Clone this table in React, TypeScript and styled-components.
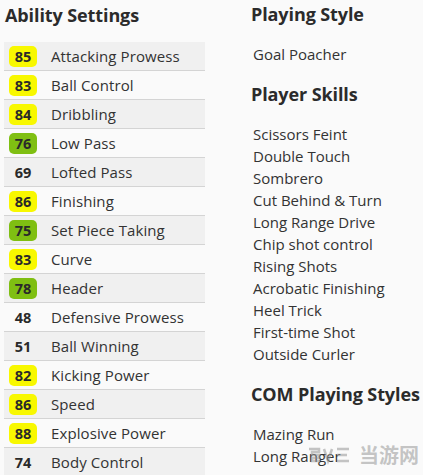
import React from "react";
import styled, { createGlobalStyle } from "styled-components";

const Global = createGlobalStyle`
  html, body { margin: 0; padding: 0; background: #fafafa; }
  body { font-family: "Open Sans", "Noto Sans", sans-serif; color: #333; }
`;

const Page = styled.div`
  position: relative;
  width: 423px;
  height: 475px;
  overflow: hidden;
  display: grid;
  grid-template-columns: 201px 1fr;
  column-gap: 45px;
  padding: 0 0 0 4px;
  box-sizing: border-box;
`;

const Column = styled.div`
  display: flex;
  flex-direction: column;
`;

const Heading = styled.h2<{ $top: number }>`
  margin: ${(p) => p.$top}px 0 0 1px;
  font-family: "Open Sans", sans-serif;
  font-weight: 700;
  font-size: 18px;
  line-height: 30px;
  color: #2b2b2b;
  white-space: nowrap;
  letter-spacing: -0.1px;
`;

const Table = styled.div`
  margin-top: 12px;
  display: flex;
  flex-direction: column;
`;

const Row = styled.div<{ $odd: boolean }>`
  display: flex;
  align-items: center;
  height: 28px;
  border-bottom: 1px solid #d4d4d4;
  background: ${(p) => (p.$odd ? "#f0f0f0" : "#fafafa")};
`;

const Badge = styled.span<{ $tone: "yellow" | "green" | "none" }>`
  width: 28px;
  height: 21px;
  margin-left: 5px;
  border-radius: 5px;
  display: flex;
  align-items: center;
  justify-content: center;
  font-weight: 700;
  font-size: 14.5px;
  color: #2a2a2a;
  background: ${(p) =>
    p.$tone === "yellow" ? "#f8f800" : p.$tone === "green" ? "#7fbf12" : "transparent"};
`;

const Label = styled.span`
  margin-left: 14px;
  font-size: 15px;
  color: #333;
  white-space: nowrap;
  letter-spacing: 0.1px;
`;

const List = styled.div<{ $top: number }>`
  margin: ${(p) => p.$top}px 0 0 3px;
  display: flex;
  flex-direction: column;
`;

const Item = styled.div`
  font-size: 15px;
  line-height: 22px;
  color: #333;
  white-space: nowrap;
`;

const Watermark = styled.div`
  position: absolute;
  right: 4px;
  bottom: 6px;
  display: flex;
  align-items: center;
  gap: 6px;
  color: rgba(150, 150, 150, 0.55);
  font-family: "Noto Sans CJK SC", sans-serif;
  font-size: 20px;
  font-weight: 700;
  pointer-events: none;
`;

type Stat = [number, string];
const stats: Stat[] = [
  [85, "Attacking Prowess"],
  [83, "Ball Control"],
  [84, "Dribbling"],
  [76, "Low Pass"],
  [69, "Lofted Pass"],
  [86, "Finishing"],
  [75, "Set Piece Taking"],
  [83, "Curve"],
  [78, "Header"],
  [48, "Defensive Prowess"],
  [51, "Ball Winning"],
  [82, "Kicking Power"],
  [86, "Speed"],
  [88, "Explosive Power"],
  [74, "Body Control"],
];

const tone = (v: number): "yellow" | "green" | "none" =>
  v >= 80 ? "yellow" : v >= 75 ? "green" : "none";

const skills = [
  "Scissors Feint",
  "Double Touch",
  "Sombrero",
  "Cut Behind & Turn",
  "Long Range Drive",
  "Chip shot control",
  "Rising Shots",
  "Acrobatic Finishing",
  "Heel Trick",
  "First-time Shot",
  "Outside Curler",
];

export default function App() {
  return (
    <>
      <Global />
      <Page>
        <Column>
          <Heading $top={0}>Ability Settings</Heading>
          <Table>
            {stats.map(([v, name], i) => (
              <Row key={name} $odd={i % 2 === 0}>
                <Badge $tone={tone(v)}>{v}</Badge>
                <Label>{name}</Label>
              </Row>
            ))}
          </Table>
        </Column>
        <Column>
          <Heading $top={-1}>Playing Style</Heading>
          <List $top={14}>
            <Item>Goal Poacher</Item>
          </List>
          <Heading $top={14}>Player Skills</Heading>
          <List $top={14}>
            {skills.map((s) => (
              <Item key={s}>{s}</Item>
            ))}
          </List>
          <Heading $top={14}>COM Playing Styles</Heading>
          <List $top={14}>
            <Item>Mazing Run</Item>
            <Item>Long Ranger</Item>
          </List>
        </Column>
        <Watermark>
          <svg width="46" height="20" viewBox="0 0 46 20">
            <path d="M2 4h10v3H5v3h7v3H5v3h8" fill="none" stroke="currentColor" strokeWidth="2.5" />
            <path d="M17 4l4 12 4-12" fill="none" stroke="currentColor" strokeWidth="2.5" />
            <path d="M30 4h12M30 10h10M30 16h12" fill="none" stroke="currentColor" strokeWidth="2.5" />
          </svg>
          <span>当游网</span>
        </Watermark>
      </Page>
    </>
  );
}
